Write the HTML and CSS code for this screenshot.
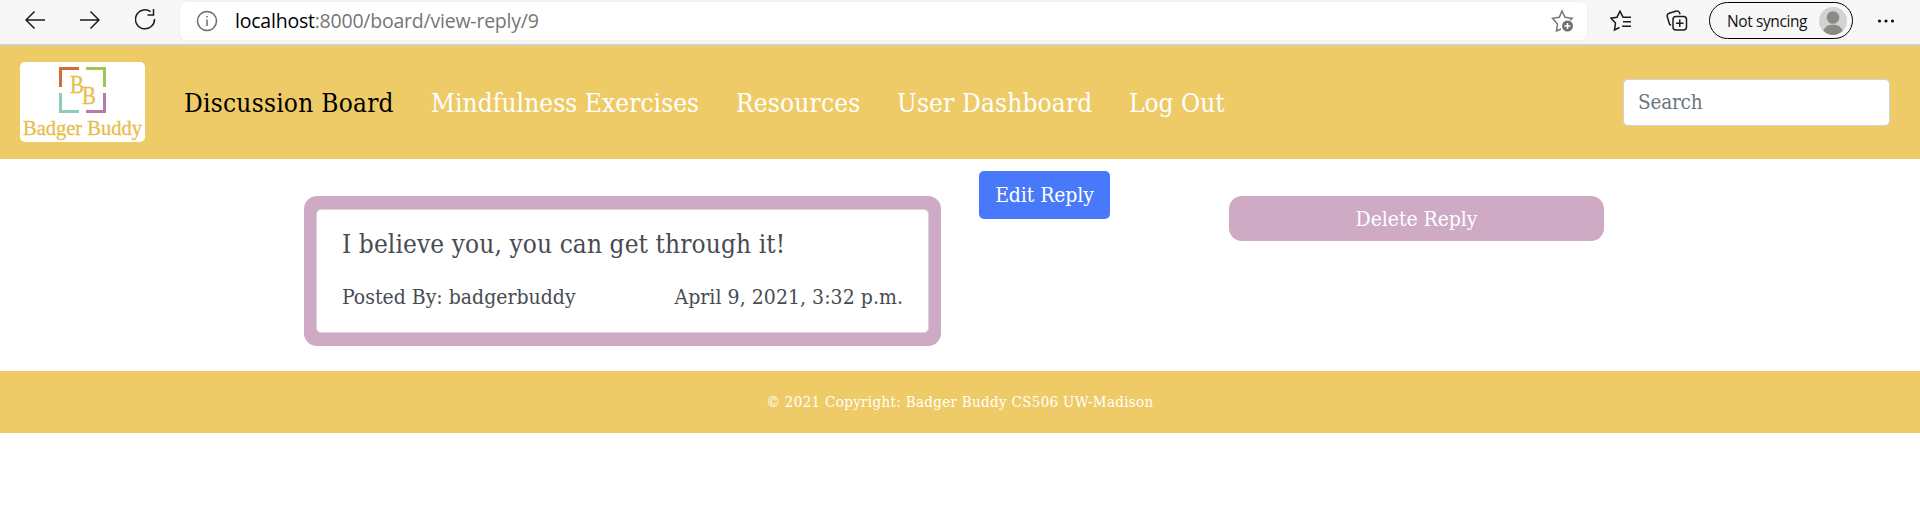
FILE: index.html
```html
<!DOCTYPE html>
<html lang="en">
<head>
<meta charset="utf-8">
<title>Badger Buddy</title>
<link rel="stylesheet" href="styles.css">
</head>
<body>
<div class="browser">
  <div class="controls">
    <svg width="20" height="20" viewBox="0 0 20 20"><path d="M20 10H1M9.500 1.500L1 10l8.500 8.500"/></svg>
    <svg width="20" height="20" viewBox="0 0 20 20"><path d="M0 10h19M10.500 1.500L19 10l-8.500 8.500"/></svg>
    <svg width="22" height="22" viewBox="0 0 22 22"><path d="M15.500 2.600A9.500 9.500 0 1 0 19.500 10M18.500 0v6H12.500"/></svg>
  </div>
  <div class="address">
    <svg class="info" width="22" height="22" viewBox="0 0 22 22"><circle cx="11" cy="11" r="9.500"/><path d="M11 9.500v6.500M11 6v1.500"/></svg>
    <span class="url"><b>localhost</b>:8000/board/view-reply/9</span>
    <svg class="star" width="24" height="24" viewBox="0 0 24 24"><path d="M10 20l-4.500 2 1-7L1.500 9.300l6.800-1L11 2l3 6.300 7 1-2 2"/><circle class="dot" cx="16.500" cy="17" r="5.500"/><path class="plus" d="M16.500 14v6M13.500 17h6"/></svg>
  </div>
  <div class="tools">
    <svg class="fav" width="22" height="22" viewBox="0 0 22 22"><path d="M9.500 17.500L4.500 20l1-7L1 8.200l6-1L10 1.200l3 6H21M13 11.700h8M12 16.200h9"/></svg>
    <svg class="coll" width="22" height="22" viewBox="0 0 22 22"><path d="M5 15.500L3.500 14 1.200 6.500Q.8 4 3 3.200L10.500 1q2-.3 3 1.500l.5 1.800"/><rect x="7" y="6.500" width="13.500" height="13.500" rx="3"/><path d="M13.750 9.500v7.500M10 13.250h7.500"/></svg>
    <div class="profile"><span>Not syncing</span>
      <svg width="28" height="28" viewBox="0 0 28 28"><circle class="face" cx="14" cy="14" r="14"/><circle class="person" cx="14" cy="10.500" r="6.300"/><path class="person" d="M4.300 23.500C7 18.500 10 17.800 14 17.800s7 .7 9.700 5.700A14 14 0 0 1 14 28a14 14 0 0 1-9.700-4.500z"/></svg>
    </div>
    <svg class="more" width="18" height="6" viewBox="0 0 18 6"><circle cx="2.500" cy="3" r="1.600"/><circle cx="9" cy="3" r="1.600"/><circle cx="15.500" cy="3" r="1.600"/></svg>
  </div>
</div>
<nav class="navbar">
  <a class="logo" href="#">
    <svg width="125" height="80" viewBox="0 0 125 80">
      <g class="frame"><path stroke="#cf6d3b" d="M40.500 25V6.500H59"/><path stroke="#9fc64f" d="M66 6.500H84.500V25"/><path stroke="#8fcbb9" d="M40.500 31V49.500H59"/><path stroke="#b87aa8" d="M66 49.500H84.500V31"/></g>
      <text x="50" y="30.500" font-size="26" textLength="14" lengthAdjust="spacingAndGlyphs">B</text>
      <text x="62" y="42" font-size="26" textLength="14" lengthAdjust="spacingAndGlyphs">B</text>
      <text x="3" y="73" font-size="21.500" textLength="119" lengthAdjust="spacingAndGlyphs">Badger Buddy</text>
    </svg>
  </a>
  <a class="link active" href="#">Discussion Board</a>
  <a class="link exercises" href="#">Mindfulness Exercises</a>
  <a class="link resources" href="#">Resources</a>
  <a class="link dashboard" href="#">User Dashboard</a>
  <a class="link logout" href="#">Log Out</a>
  <input class="search" placeholder="Search" aria-label="Search">
</nav>
<main class="content">
  <section class="frame-card">
    <div class="card">
      <h5 class="message">I believe you, you can get through it!</h5>
      <div class="meta"><span class="author">Posted By: badgerbuddy</span><span class="date">April 9, 2021, 3:32 p.m.</span></div>
    </div>
  </section>
  <a class="edit" href="#">Edit Reply</a>
  <a class="delete" href="#">Delete Reply</a>
</main>
<footer class="footer">© 2021 Copyright: Badger Buddy CS506 UW-Madison</footer>
</body>
</html>
```
FILE: styles.css
```css
* { box-sizing: border-box; }
body { margin: 0; background: #fff; font-family: "DejaVu Serif Condensed", "DejaVu Serif", serif; font-stretch: condensed; font-size: 21px; overflow: hidden; }
a { text-decoration: none; color: #fff; white-space: nowrap; }
svg { display: block; flex: none; }

.browser { height: 46px; background: #f7f7f7; border-bottom: 2px solid #cfcfcf; display: flex; align-items: flex-start; font-family: "Open Sans", sans-serif; font-stretch: normal; }
.browser svg { fill: none; stroke: #1b1b1b; stroke-width: 1.5; }
.controls { display: flex; align-items: center; width: 180px; height: 40px; padding-left: 25px; gap: 35px; }
.address { display: flex; align-items: center; width: 1407px; height: 38px; margin-top: 2px; padding: 0 12px 0 16px; background: #fff; border-radius: 6px; box-shadow: 0 0 3px #e4e4e4; }
.browser .info { stroke: #6b6b6b; margin-top: -1px; }
.url { margin-left: 17px; font-size: 19.5px; letter-spacing: -.22px; line-height: 36px; color: #767676; }
.url b { color: #000; font-weight: 400; }
.browser .star { margin-left: auto; stroke: #767676; }
.browser .star .dot { fill: #6f6f6f; stroke: none; }
.browser .star .plus { stroke: #fff; }
.tools { display: flex; align-items: center; height: 41px; }
.fav { margin-left: 23px; }
.coll { margin-left: 34px; }
.profile { width: 144px; height: 37px; margin-left: 21px; padding: 0 5px 0 17px; display: flex; align-items: center; justify-content: space-between; border: 1px solid #000; border-radius: 19px; font-size: 15.5px; letter-spacing: -.4px; color: #111; }
.profile span { white-space: nowrap; }
.browser .face { fill: #d2d2d0; stroke: none; }
.browser .person { fill: #8b8a88; stroke: none; }
.browser .more { margin-left: 24px; fill: #111; stroke: none; }

.navbar { height: 113px; padding: 0 30px 0 20px; background: #eecb67; display: flex; align-items: center; }
.logo { width: 125px; height: 80px; margin: 0 39px 1px 0; border-radius: 5px; background: #fff; font-family: "Liberation Serif", serif; }
.logo .frame { fill: none; stroke-width: 3; }
.logo text { fill: #e8bd48; stroke: #e8bd48; stroke-width: .3; }
.link { width: 247px; font-size: 26px; line-height: 40px; letter-spacing: .25px; }
.active { color: #000; }
.exercises { width: 305px; letter-spacing: .07px; }
.resources { width: 161px; letter-spacing: .2px; }
.dashboard { width: 232px; letter-spacing: .17px; }
.logout { width: 100px; letter-spacing: 0; }
.search { width: 267px; height: 47px; margin-left: auto; padding: 0 15px 1px 14px; border: 1px solid #ced4da; border-radius: 5px; background: #fff; font: 20.5px "DejaVu Serif Condensed", "DejaVu Serif", serif; font-stretch: condensed; letter-spacing: -.2px; outline: 0; }
.search::placeholder { color: #6c757d; opacity: 1; }

.content { height: 212px; padding-left: 304px; display: flex; align-items: flex-start; }
.frame-card { width: 637px; height: 150px; margin-top: 37px; padding: 13px 12px; border-radius: 13px; background: #ceaac5; }
.card { height: 124px; padding: 16px 25px; border: 1px solid #d9d2d9; border-radius: 5px; background: #fff; color: #484b52; }
.message { margin: 0; font-weight: 400; font-size: 26px; line-height: 36px; letter-spacing: .1px; white-space: nowrap; }
.meta { display: flex; justify-content: space-between; margin-top: 19px; line-height: 32px; white-space: nowrap; }
.author { letter-spacing: 0; }
.date { letter-spacing: .05px; }
.edit { width: 131px; height: 48px; margin: 12px 0 0 38px; border-radius: 5px; background: #4879fa; text-align: center; line-height: 48px; letter-spacing: -.1px; }
.delete { width: 375px; height: 45px; margin: 37px 0 0 119px; border-radius: 13px; background: #ceaac5; text-align: center; line-height: 46px; letter-spacing: -.05px; }
.footer { height: 62px; background: #eecb67; color: #fff; text-align: center; font-size: 15px; line-height: 62px; letter-spacing: .32px; }
```
